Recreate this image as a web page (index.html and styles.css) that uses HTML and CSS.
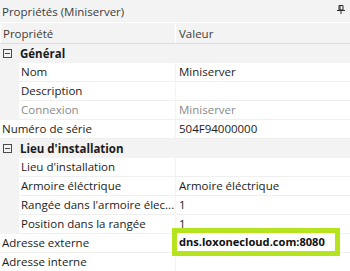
FILE: index.html
```html
<!DOCTYPE html>
<html lang="fr">
<head>
<meta charset="utf-8">
<title>Propriétés (Miniserver)</title>
<link rel="stylesheet" href="styles.css">
</head>
<body>
<div class="panel">
  <div class="titlebar">
    <span class="title">Propriétés (Miniserver)</span>
    <svg class="pin" width="8" height="9" viewBox="0 0 8 9">
      <path d="M2 0.5H6V5H2Z M0 5.5H8 M4 5.5V9 M3 1V5" fill="none" stroke="#2b2b2b" stroke-width="1"/>
    </svg>
  </div>
  <div class="header">
    <div class="hcell">Propriété</div>
    <div class="hcell">Valeur</div>
  </div>

  <div class="cat"><span class="box"></span><span class="cat-label">Général</span></div>
  <div class="row ind"><div class="gut"></div><div class="name">Nom</div><div class="val">Miniserver</div></div>
  <div class="row ind"><div class="gut"></div><div class="name">Description</div><div class="val"></div></div>
  <div class="row ind dis"><div class="gut"></div><div class="name">Connexion</div><div class="val">Miniserver</div></div>
  <div class="row"><div class="name">Numéro de série</div><div class="val">504F94000000</div></div>

  <div class="cat"><span class="box"></span><span class="cat-label">Lieu d'installation</span></div>
  <div class="row ind"><div class="gut"></div><div class="name">Lieu d'installation</div><div class="val"></div></div>
  <div class="row ind"><div class="gut"></div><div class="name">Armoire éléctrique</div><div class="val">Armoire éléctrique</div></div>
  <div class="row ind"><div class="gut"></div><div class="name">Rangée dans l'armoire élec...</div><div class="val">1</div></div>
  <div class="row ind"><div class="gut"></div><div class="name">Position dans la rangée</div><div class="val">1</div></div>
  <div class="row"><div class="name">Adresse externe</div><div class="val hl-cell"><span class="hl">dns.loxonecloud.com:8080</span></div></div>
  <div class="row"><div class="name">Adresse interne</div><div class="val"></div></div>
</div>
</body>
</html>
```
FILE: styles.css
```css
html, body {
  margin: 0;
  padding: 0;
  background: #ffffff;
}
body {
  font-family: "Open Sans", "Noto Sans", sans-serif;
  font-size: 11.5px;
  color: #1b1b1b;
  width: 350px;
  height: 271px;
  overflow: hidden;
}
.panel {
  display: flex;
  flex-direction: column;
}
.titlebar {
  height: 22px;
  background: #f3f3f3;
  display: flex;
  align-items: center;
  justify-content: space-between;
  padding: 0 5px 0 2px;
  color: #3c3c3c;
}
.pin {
  display: block;
  margin-top: -3px;
}
.header {
  display: grid;
  grid-template-columns: 175px 1fr;
  height: 20px;
  background: #f3f3f3;
  border-top: 1px solid #ffffff;
  border-bottom: 1px solid #dcdcdc;
  color: #3c3c3c;
}
.hcell {
  border-left: 1px solid #ffffff;
  padding-left: 2px;
  display: flex;
  align-items: center;
}
.hcell + .hcell {
  padding-left: 3px;
}
.cat {
  height: 19px;
  background: #f3f3f3;
  display: flex;
  align-items: center;
  font-weight: bold;
  color: #1b1b1b;
}
.box {
  width: 9px;
  height: 9px;
  box-sizing: border-box;
  border: 1px solid #4a4a4a;
  margin: 0 8px 0 3px;
  position: relative;
}
.box::after {
  content: "";
  position: absolute;
  left: 1px;
  right: 1px;
  top: 3px;
  height: 1px;
  background: #4a4a4a;
}
.row {
  display: grid;
  grid-template-columns: 175px 1fr;
  height: 19px;
}
.row.ind {
  grid-template-columns: 19px 156px 1fr;
}
.gut {
  background: #f3f3f3;
}
.name, .val {
  border-bottom: 1px solid #efefef;
  line-height: 18px;
  white-space: nowrap;
  overflow: hidden;
}
.name {
  padding-left: 2px;
  padding-right: 2px;
}
.val {
  padding-left: 3px;
  border-left: 1px solid #f3f3f3;
}
.dis .name, .dis .val {
  color: #8a8a8a;
}
.hl-cell {
  position: relative;
  overflow: visible;
}
.hl {
  position: absolute;
  left: -4px;
  top: -6px;
  width: 156px;
  height: 18px;
  border: 5px solid #b5e31d;
  background: #ffffff;
  font-size: 11.1px;
  font-weight: bold;
  color: #111111;
  padding-left: 2px;
  box-sizing: content-box;
  line-height: 18px;
}
```
